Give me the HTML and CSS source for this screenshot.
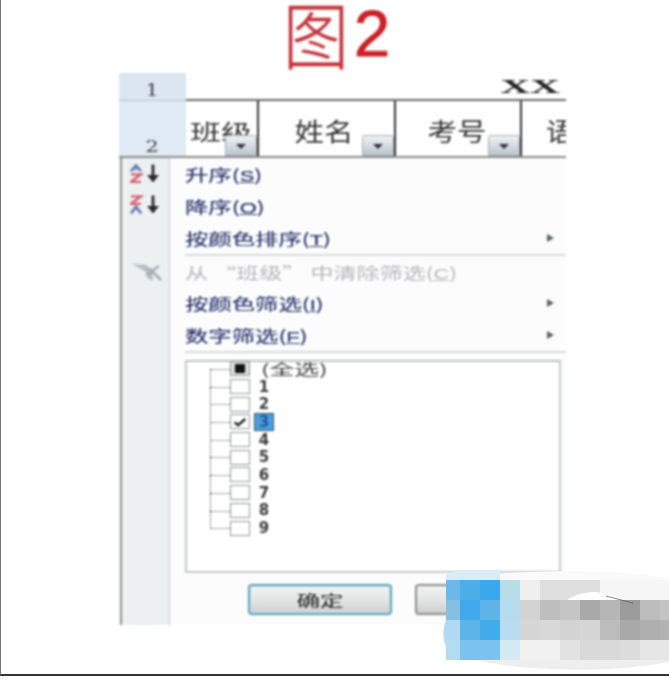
FILE: index.html
```html
<!DOCTYPE html>
<html lang="zh-CN">
<head>
<meta charset="utf-8">
<title>图2</title>
<link rel="stylesheet" href="styles.css">
</head>
<body>
<div class="page">
  <div class="photo">
    <h1 class="title"><span class="title-cjk">图</span><span class="title-num">2</span></h1>
    <div class="sheet">
      <div class="row row-one">
        <div class="rowhead"><span class="rownum">1</span></div>
        <div class="merged"><span class="xx">XX</span></div>
      </div>
      <div class="row row-two">
        <div class="rowhead"><span class="rownum">2</span></div>
        <div class="col col-a"><span class="hd hd-tight">班级</span><span class="drop"></span></div>
        <div class="col col-b"><span class="hd">姓名</span><span class="drop"></span></div>
        <div class="col col-c"><span class="hd">考号</span><span class="drop"></span></div>
        <div class="col col-d"><span class="hd">语</span></div>
      </div>
      <div class="menu">
        <div class="gutter">
          <svg class="ico ico-a" viewBox="0 0 30 28" preserveAspectRatio="none" aria-hidden="true">
            <path d="M1 11 6 3 11 11" fill="none" stroke="#6074ae" stroke-width="2.6"/>
            <path d="M3 8h6" stroke="#6074ae" stroke-width="1.8"/>
            <path d="M1 15h10L1 25h10" fill="none" stroke="#d9616f" stroke-width="3"/>
            <path d="M23 2v20" stroke="#2a2a2a" stroke-width="2.8"/>
            <path d="M17 16l6 10 6-10z" fill="#2a2a2a"/>
          </svg>
          <svg class="ico ico-b" viewBox="0 0 30 28" preserveAspectRatio="none" aria-hidden="true">
            <path d="M1 3h10L1 13h10" fill="none" stroke="#d9616f" stroke-width="3"/>
            <path d="M1 26 6 17 11 26" fill="none" stroke="#6074ae" stroke-width="2.8"/>
            <path d="M23 2v20" stroke="#2a2a2a" stroke-width="2.8"/>
            <path d="M17 16l6 10 6-10z" fill="#2a2a2a"/>
          </svg>
          <svg class="ico ico-c" viewBox="0 0 30 20" preserveAspectRatio="none" aria-hidden="true">
            <path d="M1 1 15 2 21 9V19L16 16 14 9Z" fill="#b4bec5"/>
            <path d="M15 13 27 3M18 6 29 18" fill="none" stroke="#a3adb5" stroke-width="2.6"/>
          </svg>
        </div>
        <div class="items">
          <div class="item"><span class="txt">升序(<u>S</u>)</span></div>
          <div class="item"><span class="txt">降序(<u>O</u>)</span></div>
          <div class="item"><span class="txt">按颜色排序(<u>T</u>)</span><span class="arrow"></span></div>
          <div class="sep"></div>
          <div class="item item-off"><span class="txt">从 “班级” 中清除筛选(<u>C</u>)</span></div>
          <div class="item"><span class="txt">按颜色筛选(<u>I</u>)</span><span class="arrow"></span></div>
          <div class="item"><span class="txt">数字筛选(<u>F</u>)</span><span class="arrow"></span></div>
          <div class="sep"></div>
          <div class="listbox">
            <ul class="tree">
              <li class="node"><span class="box box-mixed"></span><span class="lbl lbl-all">(全选)</span></li>
              <li class="node"><span class="box"></span><span class="lbl">1</span></li>
              <li class="node"><span class="box"></span><span class="lbl">2</span></li>
              <li class="node"><span class="box box-checked"><svg viewBox="0 0 20 14" aria-hidden="true"><path d="M4 8l4 3 8-7" fill="none" stroke="#111" stroke-width="2.6"/></svg></span><span class="lbl lbl-on">3</span></li>
              <li class="node"><span class="box"></span><span class="lbl">4</span></li>
              <li class="node"><span class="box"></span><span class="lbl">5</span></li>
              <li class="node"><span class="box"></span><span class="lbl">6</span></li>
              <li class="node"><span class="box"></span><span class="lbl">7</span></li>
              <li class="node"><span class="box"></span><span class="lbl">8</span></li>
              <li class="node"><span class="box"></span><span class="lbl">9</span></li>
            </ul>
          </div>
          <div class="buttons">
            <button class="btn btn-ok" type="button"><span class="btn-txt">确定</span></button>
            <button class="btn btn-no" type="button"></button>
          </div>
        </div>
      </div>
    </div>
  </div>
  <svg class="mosaic" viewBox="0 0 223 104" aria-hidden="true" shape-rendering="crispEdges">
    <path shape-rendering="auto" d="M54 4C100 0 170 0 223 8V30H54Z" fill="#fafafa"/>
    <path shape-rendering="auto" d="M0 70V90H30C60 98 150 106 223 92V70Z" fill="#eeeeee"/>
    <path shape-rendering="auto" d="M14 0H54V10H0V4Z" fill="#d8edf5"/>
    <path shape-rendering="auto" d="M0 50C-4 60-6 80 14 90H20V50Z" fill="#b3dcf2"/>
    <g>
      <rect x="0" y="10" width="14" height="20" fill="#6cb8e8"/><rect x="14" y="10" width="20" height="20" fill="#4eaeea"/><rect x="34" y="10" width="20" height="20" fill="#3ba7ec"/><rect x="54" y="10" width="20" height="20" fill="#b8dde9"/><rect x="74" y="10" width="20" height="20" fill="#efefef"/><rect x="94" y="10" width="60" height="20" fill="#dfdfdf"/><rect x="154" y="10" width="69" height="20" fill="#f6f6f6"/>
      <rect x="0" y="30" width="14" height="20" fill="#85c0e3"/><rect x="14" y="30" width="20" height="20" fill="#41a9ec"/><rect x="34" y="30" width="20" height="20" fill="#5fb3e6"/><rect x="54" y="30" width="20" height="20" fill="#b7dcf0"/><rect x="74" y="30" width="20" height="20" fill="#d2d3d3"/><rect x="94" y="30" width="20" height="20" fill="#bebebe"/><rect x="114" y="30" width="20" height="20" fill="#c5c5c5"/><rect x="134" y="30" width="20" height="20" fill="#a9a9a9"/><rect x="154" y="30" width="20" height="20" fill="#b6b6b6"/><rect x="174" y="30" width="20" height="20" fill="#9b9b9b"/><rect x="194" y="30" width="20" height="20" fill="#bdbdbd"/><rect x="214" y="30" width="9" height="20" fill="#c4c4c4"/>
      <rect x="0" y="50" width="14" height="20" fill="#b0daf0"/><rect x="14" y="50" width="20" height="20" fill="#5cb4e8"/><rect x="34" y="50" width="20" height="20" fill="#43aaec"/><rect x="54" y="50" width="20" height="20" fill="#b9ddf0"/><rect x="74" y="50" width="20" height="20" fill="#d6d6d6"/><rect x="94" y="50" width="20" height="20" fill="#d8d8d8"/><rect x="114" y="50" width="20" height="20" fill="#d3d3d3"/><rect x="134" y="50" width="20" height="20" fill="#d6d6d6"/><rect x="154" y="50" width="20" height="20" fill="#bcbcbc"/><rect x="174" y="50" width="20" height="20" fill="#a9a9a9"/><rect x="194" y="50" width="20" height="20" fill="#afafaf"/><rect x="214" y="50" width="9" height="20" fill="#b3b3b3"/>
      <rect x="0" y="70" width="14" height="20" fill="#b3dcf2"/><rect x="14" y="70" width="40" height="20" fill="#7cc2ee"/><rect x="54" y="70" width="20" height="20" fill="#d4ebf5"/><rect x="74" y="70" width="40" height="20" fill="#f1f1f1"/><rect x="114" y="70" width="20" height="20" fill="#e2e2e2"/><rect x="134" y="70" width="40" height="20" fill="#d9d9d9"/><rect x="174" y="70" width="20" height="20" fill="#dcdcdc"/><rect x="194" y="70" width="29" height="20" fill="#e6e6e6"/>
    </g>
    <path shape-rendering="auto" d="M121 30C130 24 140 22 150 22 160 24 170 26 178 30Z" fill="#fff"/>
    <path shape-rendering="auto" d="M160 26 187 33" stroke="#666" stroke-width=".8"/>
  </svg>
</div>
</body>
</html>
```
FILE: styles.css
```css
* { box-sizing: border-box; }
html, body { margin: 0; padding: 0; background: #fff; }
.page {
  position: relative;
  width: 669px;
  height: 676px;
  border-left: 1px solid #777;
  border-bottom: 2px solid #333;
  overflow: hidden;
}
.photo {
  filter: blur(.8px);
  padding-left: 118px;
}
.title {
  display: flex;
  align-items: flex-start;
  height: 73px;
  margin: 0 0 0 164px;
  font-weight: 400;
  color: #c9252c;
}
.title-cjk {
  display: block;
  font: 200 66px/66px "Noto Sans CJK SC", sans-serif;
  color: #c4323a;
  -webkit-text-stroke: .35px #c4323a;
  transform: scaleY(1.08);
  transform-origin: center top;
  margin-top: -4px;
}
.title-num {
  display: block;
  font: 400 65px/65px "Liberation Sans", sans-serif;
  margin: 1px 0 0 5px;
  color: #cc1f26;
  -webkit-text-stroke: .9px #cc1f26;
}
.sheet {
  width: 447px;
  overflow: hidden;
  font-family: "Noto Sans CJK SC", sans-serif;
}
.row { display: flex; }
.rowhead {
  width: 67px;
  flex: none;
  background: #dce6f1;
  color: #444;
  font-family: "DejaVu Serif", serif;
  font-size: 16px;
  display: flex;
  align-items: flex-end;
  justify-content: center;
}
.rownum { display: block; line-height: 16px; }
.row-one { height: 28px; }
.row-one .rowhead { border-bottom: 1px solid #b9c2cc; }
.row-one .rownum { transform: translateY(-1px) scaleX(1.3); }
.merged {
  flex: 1;
  display: flex;
  justify-content: flex-end;
  overflow: hidden;
  border-bottom: 2px solid #6a6a6a;
}
.xx {
  font: 700 18px/1 "Liberation Serif", serif;
  color: #222;
  transform: scaleX(2.3);
  transform-origin: right center;
  margin: 5px 6px 0 0;
}
.row-two { height: 57px; border-bottom: 2px solid #8b8b8b; }
.row-two .rowhead { background: #e0eaf4; }
.row-two .rownum { transform: translateY(-1px) scaleX(1.3); }
.col {
  position: relative;
  border-right: 2px solid #333;
  display: flex;
  justify-content: center;
  padding-top: 12px;
  color: #333;
  flex: none;
}
.col-a { width: 73px; justify-content: flex-start; padding-left: 4px; }
.col-b { width: 137px; padding-right: 4px; }
.col-c { width: 126px; padding-right: 2px; }
.col-d { width: 44px; border-right: 0; justify-content: flex-start; padding-left: 26px; }
.hd {
  display: block;
  font-size: 25px;
  line-height: 34px;
  white-space: nowrap;
  transform: scaleX(1.18);
}
.hd-tight {
  font-size: 22px;
  transform: scaleX(1.41);
  transform-origin: left center;
}
.drop {
  position: absolute;
  right: 0;
  bottom: 0;
  width: 32px;
  height: 21px;
  background: linear-gradient(#eef2f5, #bcc5cd);
  border: 1px solid #a4adb6;
  border-radius: 3px 3px 0 0;
}
.drop::after {
  content: "";
  position: absolute;
  left: 10px;
  top: 8px;
  border-style: solid;
  border-width: 5px 5px 0;
  border-color: #2b2f36 transparent transparent;
}
.menu { display: flex; height: 467px; background: #fcfcfc; }
.gutter {
  position: relative;
  width: 50px;
  flex: none;
  background: #ecf0f1;
  border-left: 2px solid #8c8c8c;
  border-right: 1px solid #ccd0d2;
  margin-left: 1px;
}
.ico { position: absolute; display: block; }
.ico-a { left: 8px; top: 5px; width: 30px; height: 21px; }
.ico-b { left: 8px; top: 36px; width: 30px; height: 21px; }
.ico-c { left: 9px; top: 105px; width: 31px; height: 19px; }
.items { flex: 1; min-width: 0; padding-left: 15px; }
.item {
  display: flex;
  align-items: center;
  height: 32px;
  position: relative;
  color: #2c3a70;
}
.txt {
  display: inline-block;
  font-size: 16px;
  white-space: nowrap;
  transform: scaleX(1.46);
  transform-origin: left center;
  text-shadow: 0 0 .5px currentColor;
}
.txt u { font-family: "Liberation Sans", sans-serif; font-size: 15px; }
.item-off { color: #b3b7bc; height: 31px; }
.item-off .txt { transform: scaleX(1.44); text-shadow: none; }
.arrow {
  position: absolute;
  right: 12px;
  top: 12px;
  border-style: solid;
  border-width: 4px 0 4px 7px;
  border-color: transparent transparent transparent #566;
}
.sep { height: 2px; background: #d8dadc; }
.listbox {
  width: 376px;
  height: 213px;
  margin-top: 7px;
  background: #fff;
  border: 2px solid #c5c8ca;
  border-top-color: #bfc2c4;
  border-radius: 1px;
}
.tree {
  position: relative;
  list-style: none;
  margin: -2px 0 0;
  padding: 0 0 0 43px;
}
.tree::before {
  content: "";
  position: absolute;
  left: 23px;
  top: 9px;
  height: 160px;
  border-left: 1px dotted #555;
}
.node {
  position: relative;
  height: 17.7px;
  display: flex;
  align-items: center;
  gap: 6px;
  color: #333;
}
.node::before {
  content: "";
  position: absolute;
  left: -20px;
  top: 9px;
  width: 20px;
  border-top: 1px dotted #555;
}
.box {
  display: block;
  width: 20px;
  height: 15px;
  border: 1px solid #8e9296;
  background: #fff;
  flex: none;
}
.box svg { display: block; width: 100%; height: 100%; }
.box-mixed { position: relative; background: #ddd; }
.box-mixed::after {
  content: "";
  position: absolute;
  left: 4px;
  top: 2px;
  width: 10px;
  height: 9px;
  background: #111;
}
.lbl {
  display: inline-block;
  font: 700 15px/16px "DejaVu Sans", sans-serif;
  color: #3c3c3c;
  width: 18px;
  text-align: center;
  margin-left: -1px;
}
.lbl-all {
  font: 400 15px/16px "Noto Sans CJK SC", sans-serif;
  width: auto;
  margin-left: 5px;
  white-space: nowrap;
  transform: scaleX(1.66);
  transform-origin: left center;
}
.lbl-on {
  background: #4d9fe3;
  color: #1d5c94;
  border: 1px solid #2f4f63;
  height: 18px;
  width: 20px;
  margin-left: -2px;
}
.buttons {
  display: flex;
  gap: 23px;
  padding: 11px 0 0 63px;
}
.btn {
  width: 144px;
  height: 31px;
  border-radius: 4px;
  padding: 0;
  font-family: "Noto Sans CJK SC", sans-serif;
  background: linear-gradient(#f2f3f3 0%, #e6e7e7 45%, #cfd1d2 100%);
}
.btn-ok { border: 2px solid #5b9fb5; box-shadow: inset 0 0 0 1px #bfeaf5; }
.btn-no { border: 2px solid #8b8b8b; flex: none; }
.btn-txt {
  display: inline-block;
  font-size: 15px;
  color: #333;
  transform: scaleX(1.55);
  text-shadow: 0 0 .5px #333;
}
.mosaic {
  position: absolute;
  left: 445px;
  top: 570px;
  width: 223px;
  height: 104px;
  overflow: visible;
  filter: blur(.3px);
}
```
